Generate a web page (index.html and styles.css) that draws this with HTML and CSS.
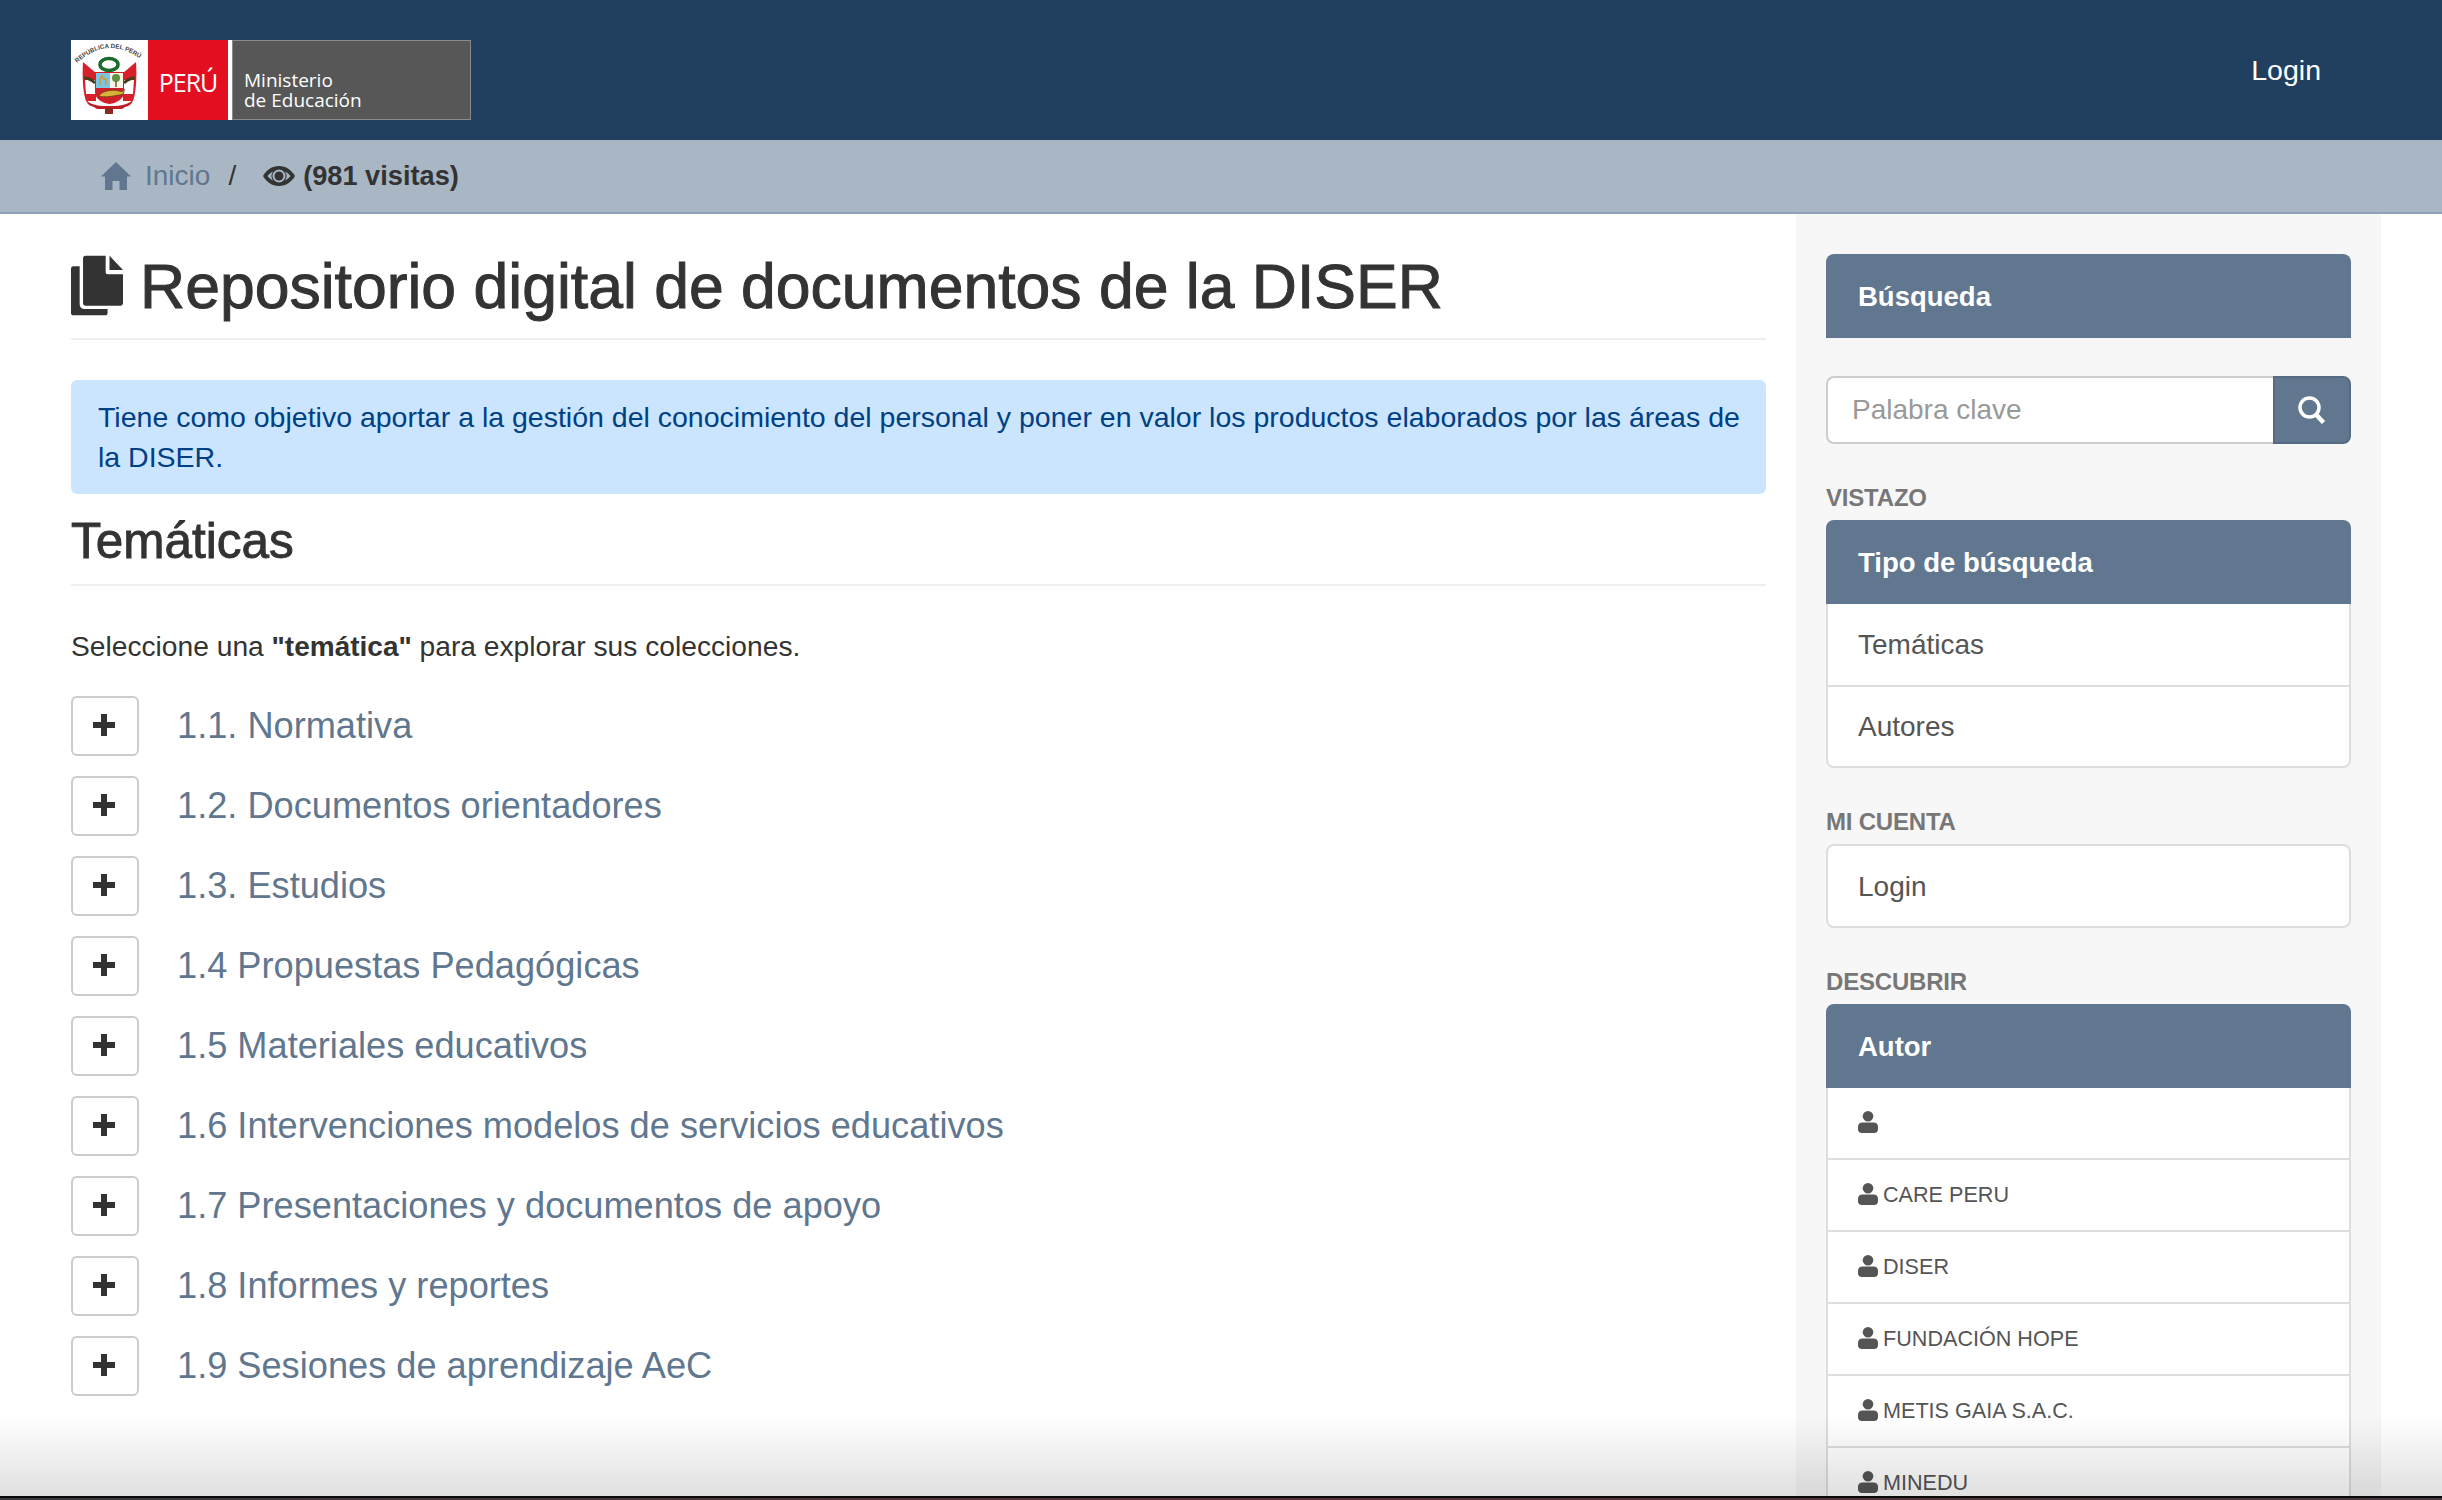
FILE: index.html
```html
<!DOCTYPE html>
<html lang="es">
<head>
<meta charset="utf-8">
<title>Repositorio digital de documentos de la DISER</title>
<link rel="stylesheet" href="styles.css">
</head>
<body>
<svg class="sprites" width="0" height="0" aria-hidden="true">
  <symbol id="i-plus" viewBox="0 0 22 22"><path d="M8 0h6v8h8v6h-8v8H8v-8H0V8h8z"/></symbol>
  <symbol id="i-user" viewBox="0 0 20 22"><circle cx="10" cy="5.300" r="5.300"/><path d="M0 18v-2.500C0 13 2 11.500 4.500 11.500h11c2.500 0 4.500 1.500 4.500 4V18c0 2.500-1.500 4-4 4H4c-2.500 0-4-1.500-4-4z"/></symbol>
</svg>
<header class="topbar">
  <a class="logo" href="#">
    <span class="logo-shield">
      <svg viewBox="0 0 77 80" width="77" height="80">
        <defs><path id="arc" d="M6 23 Q38 -6 72 21"/></defs>
        <text class="arc-text"><textPath href="#arc">REPÚBLICA DEL PERÚ</textPath></text>
        <ellipse cx="38" cy="24.500" rx="9" ry="6" fill="none" stroke="#1c6b2a" stroke-width="3.500"/>
        <path d="M12 22l13 11v28H15c-3-8-4-24-3-39z" fill="#d8202a"/>
        <path d="M65 22L52 33v28h10c3-8 4-24 3-39z" fill="#d8202a"/>
        <path d="M14 40h11v14H15z" fill="#fff"/><path d="M63 40H52v14h10z" fill="#fff"/>
        <path d="M13 38c4 0 8 2 11 5M64 38c-4 0-8 2-11 5" stroke="#4a3b1a" stroke-width="3" fill="none"/>
        <path d="M24 32h29v20c0 7-7 11-14.500 12C31 63 24 59 24 52z" fill="#d01f28"/>
        <rect x="25" y="33" width="14" height="15" fill="#7cc4e0"/>
        <rect x="39" y="33" width="13" height="15" fill="#f5f5ea"/>
        <path d="M29 45v-6l2-3 1 3h3v6" stroke="#c79a3b" stroke-width="1.500" fill="none"/>
        <circle cx="45" cy="38" r="4" fill="#5d9440"/><path d="M45 41v6" stroke="#7a5a2a" stroke-width="1.500"/>
        <path d="M28 56c2-5 14-7 20-5 3 1 5 0 5-2 1 3-1 6-5 6-5 1-15 3-20 1z" fill="#d9b23a" stroke="#5a4413" stroke-width=".8"/>
        <path d="M15 60c6 6 15 6 23 6s17 0 24-6c-1 4-4 6-8 7l-3 2H26l-3-2c-4-1-7-3-8-7z" fill="#c21d26"/>
        <rect x="34" y="68" width="8" height="6" fill="#8b2a20"/>
      </svg>
    </span>
    <span class="logo-peru">PERÚ</span>
    <span class="logo-min">Ministerio<br>de Educación</span>
  </a>
  <a class="login-link" href="#">Login</a>
</header>
<nav class="crumbs">
  <svg class="crumb-home" viewBox="0 0 30 28" width="30" height="28"><path d="M15 0l15 14.500h-4V28h-7.500v-9h-7v9H4V14.500H0z"/></svg>
  <a class="crumb-link" href="#">Inicio</a>
  <span class="crumb-sep">/</span>
  <svg class="crumb-eye" viewBox="0 0 32 20" width="32" height="20"><path fill-rule="evenodd" d="M16 0c7 0 12.500 4 16 10-3.500 6-9 10-16 10S3.500 16 0 10C3.500 4 9 0 16 0zm0 3.500a6.500 6.500 0 1 0 0 13 6.500 6.500 0 0 0 0-13zM4.500 10c2 2.300 3.500 3.600 5.500 4.600a8 8 0 0 1 0-9.200C8 6.400 6.500 7.700 4.500 10zm23 0c-2-2.300-3.500-3.600-5.500-4.600a8 8 0 0 1 0 9.200c2-1 3.500-2.300 5.500-4.600z"/><circle cx="16" cy="10" r="4.500"/></svg>
  <b class="crumb-visits">(981 visitas)</b>
</nav>
<div class="layout">
  <main class="content">
    <h1 class="page-title">
      <svg class="title-icon" viewBox="0 0 54 62" width="52" height="61"><path d="M15 0h21v17c0 1.500.8 2.300 2.300 2.300H54v30c0 1.500-1 2.700-2.500 2.700H15c-1.500 0-2.500-1-2.500-2.700V2.700C12.500 1 13.500 0 15 0z"/><path d="M40 0l14 15H40z"/><path d="M2.500 11H9v39c0 3.500 2 5.500 5.500 5.500H38v4c0 1.500-1 2.500-2.500 2.500h-33C1 62 0 61 0 59.500v-46C0 12 1 11 2.500 11z"/></svg>
      <span>Repositorio digital de documentos de la DISER</span>
    </h1>
    <div class="notice">Tiene como objetivo aportar a la gestión del conocimiento del personal y poner en valor los productos elaborados por las áreas de la DISER.</div>
    <h2 class="section-title">Temáticas</h2>
    <p class="lead">Seleccione una <b>"temática"</b> para explorar sus colecciones.</p>
    <ul class="topics">
      <li class="topic"><button class="toggle"><svg width="22" height="22"><use href="#i-plus"/></svg></button><a href="#">1.1. Normativa</a></li>
      <li class="topic"><button class="toggle"><svg width="22" height="22"><use href="#i-plus"/></svg></button><a href="#">1.2. Documentos orientadores</a></li>
      <li class="topic"><button class="toggle"><svg width="22" height="22"><use href="#i-plus"/></svg></button><a href="#">1.3. Estudios</a></li>
      <li class="topic"><button class="toggle"><svg width="22" height="22"><use href="#i-plus"/></svg></button><a href="#">1.4 Propuestas Pedagógicas</a></li>
      <li class="topic"><button class="toggle"><svg width="22" height="22"><use href="#i-plus"/></svg></button><a href="#">1.5 Materiales educativos</a></li>
      <li class="topic"><button class="toggle"><svg width="22" height="22"><use href="#i-plus"/></svg></button><a href="#">1.6 Intervenciones modelos de servicios educativos</a></li>
      <li class="topic"><button class="toggle"><svg width="22" height="22"><use href="#i-plus"/></svg></button><a href="#">1.7 Presentaciones y documentos de apoyo</a></li>
      <li class="topic"><button class="toggle"><svg width="22" height="22"><use href="#i-plus"/></svg></button><a href="#">1.8 Informes y reportes</a></li>
      <li class="topic"><button class="toggle"><svg width="22" height="22"><use href="#i-plus"/></svg></button><a href="#">1.9 Sesiones de aprendizaje AeC</a></li>
    </ul>
  </main>
  <aside class="sidebar">
    <div class="panel-head solo">Búsqueda</div>
    <form class="search">
      <input class="search-input" type="text" placeholder="Palabra clave">
      <button class="search-btn" type="button"><svg viewBox="0 0 28 28" width="28" height="28"><circle cx="11.500" cy="11.500" r="9.500" fill="none" stroke="#fff" stroke-width="3.500"/><path d="M18 18.500l7.500 8" stroke="#fff" stroke-width="4.500" fill="none"/></svg></button>
    </form>
    <h3 class="side-label first">VISTAZO</h3>
    <div class="panel-head">Tipo de búsqueda</div>
    <ul class="list after-head">
      <li class="list-item big">Temáticas</li>
      <li class="list-item big">Autores</li>
    </ul>
    <h3 class="side-label">MI CUENTA</h3>
    <ul class="list rounded">
      <li class="list-item single">Login</li>
    </ul>
    <h3 class="side-label">DESCUBRIR</h3>
    <div class="panel-head">Autor</div>
    <ul class="list after-head">
      <li class="list-item small"><svg class="user" width="20" height="22"><use href="#i-user"/></svg></li>
      <li class="list-item small"><svg class="user" width="20" height="22"><use href="#i-user"/></svg>CARE PERU</li>
      <li class="list-item small"><svg class="user" width="20" height="22"><use href="#i-user"/></svg>DISER</li>
      <li class="list-item small"><svg class="user" width="20" height="22"><use href="#i-user"/></svg>FUNDACIÓN HOPE</li>
      <li class="list-item small"><svg class="user" width="20" height="22"><use href="#i-user"/></svg>METIS GAIA S.A.C.</li>
      <li class="list-item small"><svg class="user" width="20" height="22"><use href="#i-user"/></svg>MINEDU</li>
    </ul>
  </aside>
</div>
<div class="fade"></div>
<div class="edge"></div>
</body>
</html>
```
FILE: styles.css
```css
* { box-sizing: border-box; }
html, body { margin: 0; height: 1500px; overflow: hidden; }
body { font-family: "Liberation Sans", Arial, sans-serif; color: #333; background: #fff; font-size: 28px; line-height: 40px; }
a { color: inherit; text-decoration: none; }
.sprites { position: absolute; }

.topbar { height: 140px; background: #213f5e; display: flex; align-items: flex-start; justify-content: space-between; padding: 40px 121px 0 71px; }
.logo { display: flex; width: 400px; height: 80px; }
.logo-shield { width: 77px; height: 80px; background: #fff; flex: none; display: block; }
.logo-shield svg { display: block; }
.arc-text { font-family: "Liberation Sans", sans-serif; font-size: 6.200px; font-weight: 700; fill: #444; }
.logo-peru { width: 80px; flex: none; background: #e30f21; color: #fff; font-family: "Open Sans", sans-serif; font-size: 25px; letter-spacing: -1px; line-height: 84px; text-align: center; box-sizing: content-box; border-right: 4px solid #fff; }
.logo-min { flex: 1; background: #575757; border: 1px solid #8a8a8a; color: #fff; font-family: "Open Sans", sans-serif; font-size: 19px; line-height: 20px; padding: 29px 0 0 11px; }
.login-link { color: #fff; font-size: 28.500px; line-height: 40px; margin-top: 10px; }

.crumbs { height: 74px; background: #a9b7c4; border-bottom: 2px solid #8fa2b5; display: flex; align-items: center; padding-left: 101px; font-size: 28px; }
.crumb-home { fill: #60778f; margin-right: 14px; }
.crumb-link { color: #60778f; }
.crumb-sep { margin: 0 27px 0 18px; }
.crumb-eye { fill: #333; margin-right: 8px; }
.crumb-visits { font-weight: 700; font-size: 27.200px; }

.layout { display: flex; align-items: stretch; height: 1286px; }
.content { width: 1796px; flex: none; padding: 0 30px 0 71px; }
.page-title { margin: 35px 0 0; padding-bottom: 16px; border-bottom: 2px solid #eee; font-size: 62.500px; line-height: 70px; font-weight: 500; display: flex; align-items: center; gap: 17px; height: 91px; -webkit-text-stroke: 1px #333; }
.title-icon { fill: #333; flex: none; }
.notice { margin-top: 40px; background: #cce5ff; color: #004085; padding: 17px 18px 17px 27px; border-radius: 6px; height: 114px; font-size: 28.500px; }
.section-title { margin: 22px 0 0; padding-bottom: 16px; height: 70px; border-bottom: 2px solid #eee; font-size: 49.500px; line-height: 50px; font-weight: 500; -webkit-text-stroke: 0.9px #333; }
.lead { margin: 40px 0 0; line-height: 40px; font-size: 28.200px; }
.lead b { font-size: 28px; }
.topics { list-style: none; margin: 19px 0 0; padding: 0; }
.topic { display: flex; align-items: center; height: 80px; }
.topic a { color: #60778f; font-size: 36.200px; }
.toggle { width: 68px; height: 60px; flex: none; background: #fff; border: 2px solid #ccc; border-radius: 6px; padding: 0; margin-right: 38px; display: flex; align-items: center; justify-content: center; }
.toggle svg { fill: #333; margin-right: 2px; margin-bottom: 2px; }

.sidebar { width: 585px; flex: none; background: #f7f7f7; padding: 40px 30px 0; }
.panel-head { height: 84px; background: #60778f; color: #fff; font-weight: 700; font-size: 27.500px; line-height: 86px; padding-left: 32px; border-radius: 8px 8px 0 0; }
.search { display: flex; margin-top: 38px; height: 68px; }
.search-input { flex: 1; min-width: 0; height: 68px; border: 2px solid #ccc; border-right: 0; border-radius: 8px 0 0 8px; background: #fff; padding: 0 24px; font: 28px "Liberation Sans", sans-serif; color: #333; }
.search-input::placeholder { color: #999; opacity: 1; }
.search-btn { width: 78px; flex: none; background: #60778f; border: 2px solid #566b81; border-radius: 0 8px 8px 0; display: flex; align-items: center; justify-content: center; padding: 0; }
.side-label { margin: 32px 0 0; font-size: 24px; letter-spacing: -0.2px; line-height: 44px; height: 44px; font-weight: 700; color: #777; }
.list { list-style: none; margin: 0; padding: 0; background: #fff; border: 2px solid #ddd; border-top: 0; border-radius: 0 0 8px 8px; }
.list.rounded { border-top: 2px solid #ddd; border-radius: 8px; }
.list-item { display: flex; align-items: center; padding-left: 30px; }
.list-item + .list-item { border-top: 2px solid #ddd; }
.big { height: 81px; font-size: 28px; color: #555; }
.single { height: 80px; font-size: 28px; color: #555; padding-top: 1px; }
.small { height: 72px; font-size: 21.600px; color: #555; }
.small:first-child { height: 70px; }
.user { fill: #555; margin-right: 5px; margin-bottom: 2px; }

.fade { position: fixed; left: 0; right: 0; bottom: 4px; height: 80px; background: linear-gradient(to bottom, rgba(0,0,0,0), rgba(0,0,0,.12)); pointer-events: none; }
.edge { position: fixed; left: 0; right: 0; bottom: 0; height: 4px; border-top: 2px solid #0a0a0a; background: linear-gradient(to right, #3a3a40, #5a3338 50%, #4a3840); }
```
